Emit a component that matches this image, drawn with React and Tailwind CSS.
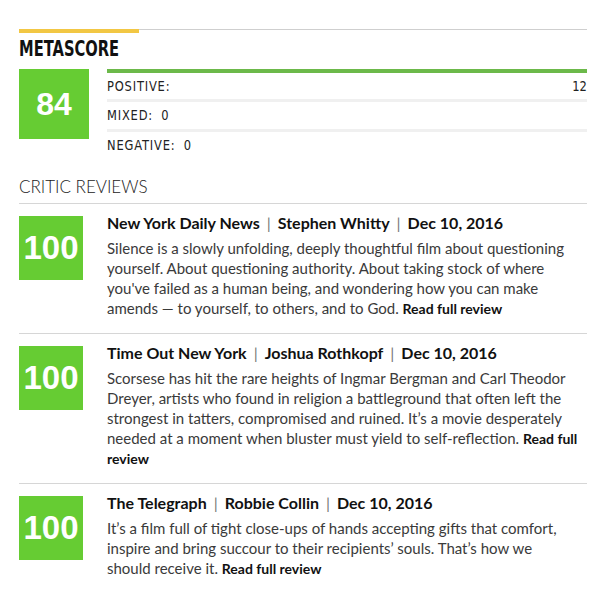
import React from "react";

const condensed = {
  fontFamily: '"DejaVu Sans", "Liberation Sans", sans-serif',
};

const reviews = [
  {
    score: 100,
    outlet: "New York Daily News",
    critic: "Stephen Whitty",
    date: "Dec 10, 2016",
    text: "Silence is a slowly unfolding, deeply thoughtful film about questioning yourself. About questioning authority. About taking stock of where you've failed as a human being, and wondering how you can make amends — to yourself, to others, and to God.",
  },
  {
    score: 100,
    outlet: "Time Out New York",
    critic: "Joshua Rothkopf",
    date: "Dec 10, 2016",
    text: "Scorsese has hit the rare heights of Ingmar Bergman and Carl Theodor Dreyer, artists who found in religion a battleground that often left the strongest in tatters, compromised and ruined. It’s a movie desperately needed at a moment when bluster must yield to self-reflection.",
  },
  {
    score: 100,
    outlet: "The Telegraph",
    critic: "Robbie Collin",
    date: "Dec 10, 2016",
    text: "It’s a film full of tight close-ups of hands accepting gifts that comfort, inspire and bring succour to their recipients’ souls. That’s how we should receive it.",
  },
];

const tallies = [
  { label: "POSITIVE:", count: 12, full: true },
  { label: "MIXED:", count: 0 },
  { label: "NEGATIVE:", count: 0 },
];

function Review({ review }) {
  return (
    <div className="flex border-b border-[#d6d6d6] pt-[9px] pb-[15px] last:border-b-0">
      <div className="w-[88px] shrink-0 pt-[3px]">
        <div className="flex h-[64px] w-[64px] items-center justify-center bg-[#66cc33] text-[33px] font-bold text-white" style={{ fontFamily: '"Liberation Sans", Arial, sans-serif' }}>
          {review.score}
        </div>
      </div>
      <div className="max-w-[471px] flex-1">
        <div className="whitespace-nowrap text-[16px] font-bold leading-[20px] text-[#111]">
          {review.outlet}
          <span className="mx-[7px] font-normal text-[#777]">|</span>
          {review.critic}
          <span className="mx-[7px] font-normal text-[#777]">|</span>
          {review.date}
        </div>
        <p className="mt-[5px] text-[15px] leading-[20px] text-[#3a3a3a]">
          {review.text}{" "}
          <a className="text-[14px] font-bold leading-[14px] text-[#111]">Read full review</a>
        </p>
      </div>
    </div>
  );
}

export default function App() {
  return (
    <div className="min-h-[591px] bg-white pl-[19px] pt-[29px]" style={{ fontFamily: "Lato, sans-serif" }}>
      <div className="w-[568px]">
        {/* Metascore */}
        <div className="border-t border-[#cfcfcf]">
          <div className="-mt-px h-[4px] w-[120px] bg-[#f2c744]" />
        </div>
        <h2 className="mt-[4px] h-[24px] leading-[24px]">
          <span className="inline-block origin-left scale-x-[0.7] text-[21px] font-bold text-[#111]" style={condensed}>
            METASCORE
          </span>
        </h2>
        <div className="mt-[8px] flex">
          <div className="w-[88px] shrink-0">
            <div className="flex h-[70px] w-[70px] items-center justify-center bg-[#66cc33] text-[32px] font-bold text-white" style={{ fontFamily: '"Liberation Sans", Arial, sans-serif' }}>
              84
            </div>
          </div>
          <div className="flex-1">
            {tallies.map((t) => (
              <div key={t.label} className="h-[30px]">
                <div className={t.full ? "h-[4px] bg-[#6cb94a]" : "h-[3px] bg-[#f0f0f0]"} />
                <div className="flex h-[26px] items-center justify-between text-[14px] text-[#222]" style={condensed}>
                  <span className="inline-block origin-left scale-x-[0.82] tracking-[1px]">
                    {t.label}
                    {!t.full && <span className="ml-[10px]">{t.count}</span>}
                  </span>
                  {t.full && <span className="inline-block origin-right scale-x-[0.82]">{t.count}</span>}
                </div>
              </div>
            ))}
          </div>
        </div>

        {/* Critic reviews */}
        <h3 className="mt-[18px] border-b border-[#d6d6d6] pb-[6px] text-[17px] font-light leading-[20px] text-[#222]">
          CRITIC REVIEWS
        </h3>
        {reviews.map((r) => (
          <Review key={r.outlet} review={r} />
        ))}
      </div>
    </div>
  );
}
